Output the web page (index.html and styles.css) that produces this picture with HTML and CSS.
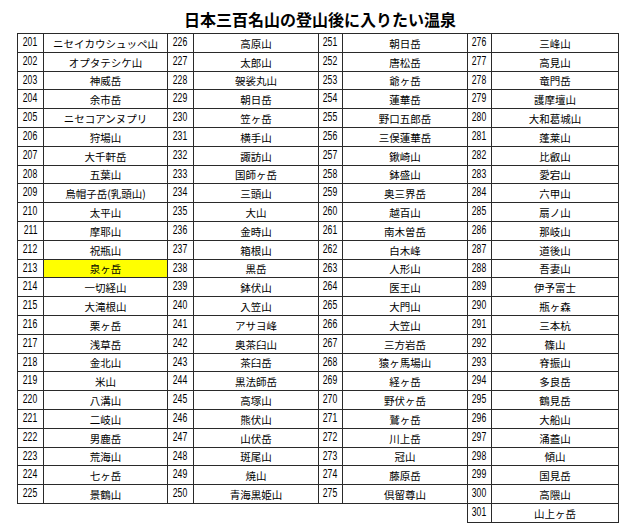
FILE: index.html
```html
<!DOCTYPE html>
<html lang="ja">
<head>
<meta charset="utf-8">
<title>日本三百名山の登山後に入りたい温泉</title>
<link rel="stylesheet" href="styles.css">
</head>
<body>
<div class="page">
<h1 class="title">日本三百名山の登山後に入りたい温泉</h1>
<table class="list">
<colgroup>
<col class="cn1"><col class="cm1"><col class="cn2"><col class="cm2"><col class="cn3"><col class="cm3"><col class="cn4"><col class="cm4">
</colgroup>
<tbody>
<tr><td class="n"><span>201</span></td><td class="m">ニセイカウシュッペ山</td><td class="n"><span>226</span></td><td class="m">高原山</td><td class="n"><span>251</span></td><td class="m">朝日岳</td><td class="n"><span>276</span></td><td class="m">三峰山</td></tr>
<tr><td class="n"><span>202</span></td><td class="m">オプタテシケ山</td><td class="n"><span>227</span></td><td class="m">太郎山</td><td class="n"><span>252</span></td><td class="m">唐松岳</td><td class="n"><span>277</span></td><td class="m">高見山</td></tr>
<tr><td class="n"><span>203</span></td><td class="m">神威岳</td><td class="n"><span>228</span></td><td class="m">袈裟丸山</td><td class="n"><span>253</span></td><td class="m">爺ヶ岳</td><td class="n"><span>278</span></td><td class="m">竜門岳</td></tr>
<tr><td class="n"><span>204</span></td><td class="m">余市岳</td><td class="n"><span>229</span></td><td class="m">朝日岳</td><td class="n"><span>254</span></td><td class="m">蓮華岳</td><td class="n"><span>279</span></td><td class="m">護摩壇山</td></tr>
<tr><td class="n"><span>205</span></td><td class="m">ニセコアンヌプリ</td><td class="n"><span>230</span></td><td class="m">笠ヶ岳</td><td class="n"><span>255</span></td><td class="m">野口五郎岳</td><td class="n"><span>280</span></td><td class="m">大和葛城山</td></tr>
<tr><td class="n"><span>206</span></td><td class="m">狩場山</td><td class="n"><span>231</span></td><td class="m">横手山</td><td class="n"><span>256</span></td><td class="m">三俣蓮華岳</td><td class="n"><span>281</span></td><td class="m">蓬莱山</td></tr>
<tr><td class="n"><span>207</span></td><td class="m">大千軒岳</td><td class="n"><span>232</span></td><td class="m">諏訪山</td><td class="n"><span>257</span></td><td class="m">鍬崎山</td><td class="n"><span>282</span></td><td class="m">比叡山</td></tr>
<tr><td class="n"><span>208</span></td><td class="m">五葉山</td><td class="n"><span>233</span></td><td class="m">国師ヶ岳</td><td class="n"><span>258</span></td><td class="m">鉢盛山</td><td class="n"><span>283</span></td><td class="m">愛宕山</td></tr>
<tr><td class="n"><span>209</span></td><td class="m">烏帽子岳(乳頭山)</td><td class="n"><span>234</span></td><td class="m">三頭山</td><td class="n"><span>259</span></td><td class="m">奥三界岳</td><td class="n"><span>284</span></td><td class="m">六甲山</td></tr>
<tr><td class="n"><span>210</span></td><td class="m">太平山</td><td class="n"><span>235</span></td><td class="m">大山</td><td class="n"><span>260</span></td><td class="m">越百山</td><td class="n"><span>285</span></td><td class="m">扇ノ山</td></tr>
<tr><td class="n"><span>211</span></td><td class="m">摩耶山</td><td class="n"><span>236</span></td><td class="m">金時山</td><td class="n"><span>261</span></td><td class="m">南木曽岳</td><td class="n"><span>286</span></td><td class="m">那岐山</td></tr>
<tr><td class="n"><span>212</span></td><td class="m">祝瓶山</td><td class="n"><span>237</span></td><td class="m">箱根山</td><td class="n"><span>262</span></td><td class="m">白木峰</td><td class="n"><span>287</span></td><td class="m">道後山</td></tr>
<tr><td class="n"><span>213</span></td><td class="m hl">泉ヶ岳</td><td class="n"><span>238</span></td><td class="m">黒岳</td><td class="n"><span>263</span></td><td class="m">人形山</td><td class="n"><span>288</span></td><td class="m">吾妻山</td></tr>
<tr><td class="n"><span>214</span></td><td class="m">一切経山</td><td class="n"><span>239</span></td><td class="m">鉢伏山</td><td class="n"><span>264</span></td><td class="m">医王山</td><td class="n"><span>289</span></td><td class="m">伊予富士</td></tr>
<tr><td class="n"><span>215</span></td><td class="m">大滝根山</td><td class="n"><span>240</span></td><td class="m">入笠山</td><td class="n"><span>265</span></td><td class="m">大門山</td><td class="n"><span>290</span></td><td class="m">瓶ヶ森</td></tr>
<tr><td class="n"><span>216</span></td><td class="m">栗ヶ岳</td><td class="n"><span>241</span></td><td class="m">アサヨ峰</td><td class="n"><span>266</span></td><td class="m">大笠山</td><td class="n"><span>291</span></td><td class="m">三本杭</td></tr>
<tr><td class="n"><span>217</span></td><td class="m">浅草岳</td><td class="n"><span>242</span></td><td class="m">奥茶臼山</td><td class="n"><span>267</span></td><td class="m">三方岩岳</td><td class="n"><span>292</span></td><td class="m">篠山</td></tr>
<tr><td class="n"><span>218</span></td><td class="m">金北山</td><td class="n"><span>243</span></td><td class="m">茶臼岳</td><td class="n"><span>268</span></td><td class="m">猿ヶ馬場山</td><td class="n"><span>293</span></td><td class="m">脊振山</td></tr>
<tr><td class="n"><span>219</span></td><td class="m">米山</td><td class="n"><span>244</span></td><td class="m">黒法師岳</td><td class="n"><span>269</span></td><td class="m">経ヶ岳</td><td class="n"><span>294</span></td><td class="m">多良岳</td></tr>
<tr><td class="n"><span>220</span></td><td class="m">八溝山</td><td class="n"><span>245</span></td><td class="m">高塚山</td><td class="n"><span>270</span></td><td class="m">野伏ヶ岳</td><td class="n"><span>295</span></td><td class="m">鶴見岳</td></tr>
<tr><td class="n"><span>221</span></td><td class="m">二岐山</td><td class="n"><span>246</span></td><td class="m">熊伏山</td><td class="n"><span>271</span></td><td class="m">鷲ヶ岳</td><td class="n"><span>296</span></td><td class="m">大船山</td></tr>
<tr><td class="n"><span>222</span></td><td class="m">男鹿岳</td><td class="n"><span>247</span></td><td class="m">山伏岳</td><td class="n"><span>272</span></td><td class="m">川上岳</td><td class="n"><span>297</span></td><td class="m">涌蓋山</td></tr>
<tr><td class="n"><span>223</span></td><td class="m">荒海山</td><td class="n"><span>248</span></td><td class="m">斑尾山</td><td class="n"><span>273</span></td><td class="m">冠山</td><td class="n"><span>298</span></td><td class="m">傾山</td></tr>
<tr><td class="n"><span>224</span></td><td class="m">七ヶ岳</td><td class="n"><span>249</span></td><td class="m">焼山</td><td class="n"><span>274</span></td><td class="m">藤原岳</td><td class="n"><span>299</span></td><td class="m">国見岳</td></tr>
<tr><td class="n"><span>225</span></td><td class="m">景鶴山</td><td class="n"><span>250</span></td><td class="m">青海黒姫山</td><td class="n"><span>275</span></td><td class="m">倶留尊山</td><td class="n"><span>300</span></td><td class="m">高隈山</td></tr>
<tr class="last"><td class="e"></td><td class="e"></td><td class="e"></td><td class="e"></td><td class="e"></td><td class="e"></td><td class="n"><span>301</span></td><td class="m">山上ヶ岳</td></tr>
</tbody>
</table>
</div>
</body>
</html>
```

FILE: styles.css
```css
html, body {
  margin: 0;
  padding: 0;
  background: #ffffff;
}

.page {
  padding: 9px 0 0 17px;
  width: 602px;
}

.title {
  margin: 0 0 4px 0;
  height: 20px;
  font: 700 16px/20px "Noto Sans CJK JP", sans-serif;
  color: #000;
  text-align: center;
  padding-left: 4px;
}

.list {
  border-collapse: collapse;
  table-layout: fixed;
  width: 602px;
  color: #000;
}

.cn1, .cn2 { width: 26px; }
.cn3, .cn4 { width: 24px; }
.cm1 { width: 124px; }
.cm2, .cm3 { width: 125px; }
.cm4 { width: 127px; }

.list tr {
  height: 18.8px;
}

.list td {
  border: 1px solid #2a2a2a;
  padding: 0;
  overflow: hidden;
  white-space: nowrap;
}

.list td.n {
  vertical-align: top;
  text-align: center;
  font: 12px/14px "Liberation Sans", sans-serif;
  padding-top: 1px;
}

.list td.n span {
  display: inline-block;
  transform: scaleX(0.72);
}

.list td.m {
  text-align: center;
  vertical-align: middle;
  font: 400 10.5px/14px "Noto Sans CJK JP", sans-serif;
  padding-top: 2px;
}

.list td.hl {
  background: #ffff00;
}

.list td.e {
  border: none;
}
```
